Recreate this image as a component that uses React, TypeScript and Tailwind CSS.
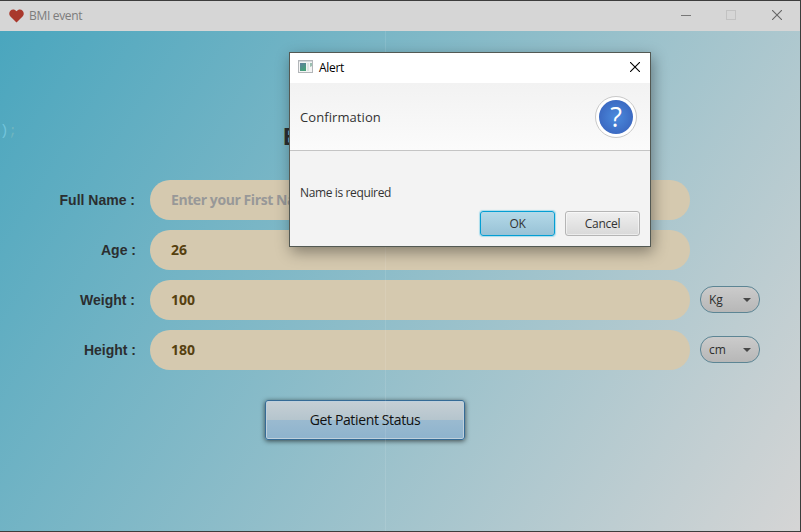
import type { ReactNode } from "react";

const ui = "font-['Open_Sans','Noto_Sans',sans-serif]";
const arial = "font-['Liberation_Sans',Arial,sans-serif]";

function CloseIcon({ color }: { color: string }) {
  return (
    <svg width="10" height="10" viewBox="0 0 10 10" stroke={color} strokeWidth="1.1">
      <path d="M0 0L10 10M10 0L0 10" />
    </svg>
  );
}

function Row({ label, labelWidth, children, unit }: { label: string; labelWidth: string; children: ReactNode; unit?: string }) {
  return (
    <div className="flex h-10 items-center">
      <div className="w-[150px] shrink-0">
        <div className={`${labelWidth} whitespace-nowrap text-right text-[14px] font-bold leading-10 text-[#2b2e30] ${arial}`}>{label}</div>
      </div>
      <div className={`h-10 w-[540px] rounded-[20px] bg-[#d5c9af] pl-[21px] text-[14px] font-bold leading-10 ${ui}`}>{children}</div>
      {unit && (
        <div className={`-mt-px ml-[10px] flex h-[27px] w-[60px] items-center justify-between rounded-[13px] border border-[#5c8594] bg-linear-to-b from-[#cbcbcb] to-[#b7b7b7] pl-2 pr-[8px] text-[12px] text-[#2d2d2d] ${ui}`}>
          <span>{unit}</span>
          <svg width="8" height="4" viewBox="0 0 8 4"><path d="M0 0h8L4 4z" fill="#474747" /></svg>
        </div>
      )}
    </div>
  );
}

function Dialog() {
  return (
    <div className={`absolute left-[289px] top-[51px] flex h-[195px] w-[362px] flex-col border border-[#535953] bg-[#f3f3f3] shadow-[2px_5px_14px_rgba(0,0,0,0.38)] ${ui}`}>
      <div className="flex h-[30px] items-center bg-white pl-2 pr-[10px]">
        <svg width="15" height="13" viewBox="0 0 15 13" className="-mt-[3px]">
          <defs>
            <linearGradient id="thumb" x1="0" y1="0" x2="0.5" y2="1">
              <stop stopColor="#617f9e" /><stop offset="1" stopColor="#45a079" />
            </linearGradient>
          </defs>
          <rect x=".5" y=".5" width="14" height="12" fill="#f4f4f4" stroke="#b2b6b9" />
          <path d="M1 1.5h13" stroke="#d3d8dc" />
          <rect x="2" y="3" width="6" height="8" fill="url(#thumb)" />
          <rect x="9" y="3" width="2" height="8" fill="#dde4e2" />
          <path d="M12 3h2v3l-2 1z" fill="#9bbfb0" />
        </svg>
        <span className="ml-[6px] text-[12px] tracking-[-0.3px] text-black">Alert</span>
        <span className="-mt-[3px] ml-auto"><CloseIcon color="#000" /></span>
      </div>
      <div className="flex h-[68px] items-center justify-between border-b border-[#c4c4c4] bg-linear-to-b from-[#f2f2f2] to-[#fbfbfb] pl-[10px] pr-[13px]">
        <span className="pt-[2px] text-[13px] tracking-[0.08px] text-[#333]">Confirmation</span>
        <div className="flex size-[42px] items-center justify-center rounded-full border border-[#c9c9c9] bg-white">
          <div className="flex size-[34px] items-center justify-center rounded-full bg-radial from-[#4b8bdd] to-[#365cb7] text-[27px] leading-none text-white">?</div>
        </div>
      </div>
      <div className="pl-[10px] pt-[33px] text-[12px] leading-[18px] tracking-[-0.37px] text-[#333]">Name is required</div>
      <div className="mt-[9px] flex gap-[10px] pl-[190px] text-[12px] text-[#333]">
        <div className="flex h-[25px] w-[75px] items-center justify-center rounded-[3px] border border-[#039ed3] bg-linear-to-b from-[#b4d9e8] to-[#98c2d6] tracking-[-0.25px] shadow-[0_0_1px_1px_#a9dcec]">OK</div>
        <div className="flex h-[25px] w-[75px] items-center justify-center rounded-[3px] border border-[#b5b5b5] bg-linear-to-b from-[#efefef] to-[#d9d9d9] tracking-[-0.3px] shadow-[inset_0_0_0_1px_#ffffff80]">Cancel</div>
      </div>
    </div>
  );
}

export default function App() {
  return (
    <div className="relative flex h-[532px] w-[801px] flex-col overflow-hidden border-b border-r border-t border-[#3d3d3d] bg-[#d6d6d6]">
      <header className={`flex h-[30px] shrink-0 items-center pl-[9px] pr-[18px] text-[12px] text-[#7c7c7c] ${ui}`}>
        <svg width="15" height="14" viewBox="0 0 15 14"><path d="M7.5 13.5L1.2 7.2C-2 3.4 3.5-2.4 7.5 2.2C11.5-2.4 17 3.4 13.8 7.2z" fill="#a9382c" /></svg>
        <span className="ml-[5px] tracking-[-0.32px]">BMI event</span>
        <div className="-mt-[2px] ml-auto flex items-center">
          <div className="h-px w-[10px] bg-[#777]" />
          <div className="ml-[35px] size-[10px] border border-[#c2c2c2]" />
          <div className="ml-[36px]"><CloseIcon color="#666" /></div>
        </div>
      </header>
      <main className="relative flex-1 bg-[linear-gradient(122deg,#4aa6be,#d5d5d5)]">
        <h1 className={`h-[149px] pl-[283px] pt-[92px] text-[24px] font-bold leading-[28px] text-[#2b2e30] ${arial}`}>BMI</h1>
        <div className="flex flex-col gap-[10px]">
          <Row label="Full Name :" labelWidth="w-[135px]"><span className="tracking-[-0.42px] text-[#989898]">Enter your First Name</span></Row>
          <Row label="Age :" labelWidth="w-[136px]"><span className="text-[#55400f]">26</span></Row>
          <Row label="Weight :" labelWidth="w-[135px]" unit="Kg"><span className="text-[#55400f]">100</span></Row>
          <Row label="Height :" labelWidth="w-[136px]" unit="cm"><span className="text-[#55400f]">180</span></Row>
        </div>
        <div className={`ml-[265px] mt-[30px] flex h-[40px] w-[200px] items-center justify-center rounded-[3px] border border-[#356b96] bg-[linear-gradient(#c6cfd5,#b5c5cd_50%,#9abad0_50%,#8eb3cd)] pb-px text-[14px] tracking-[-0.36px] text-[#101010] shadow-[0_1px_5px_rgba(0,0,0,0.65),inset_0_0_0_1px_#bfd0dc] ${ui}`}>
          Get Patient Status
        </div>
        <div className="absolute bottom-0 left-[385px] top-0 w-px bg-white/10" />
        <div className="absolute left-0 top-[91px] font-['Liberation_Mono',monospace] text-[14px] leading-[18px] text-[#73c5dc]">)<span className="text-[#70b5be]">;</span></div>
      </main>
      <Dialog />
    </div>
  );
}
